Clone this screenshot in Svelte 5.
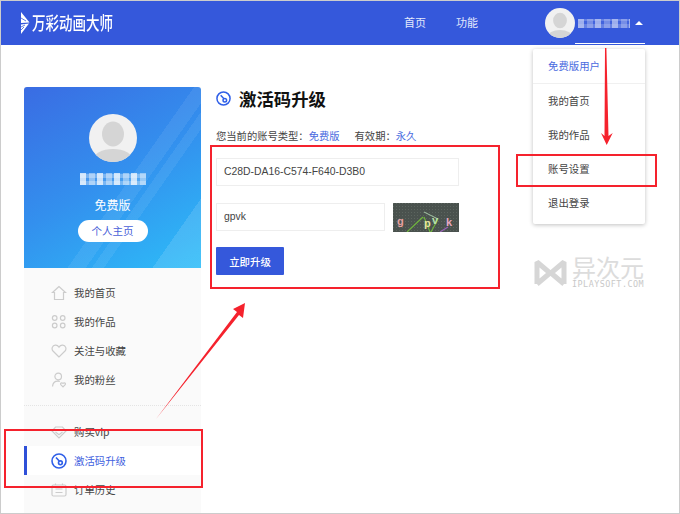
<script>
	const groupA = [
		{ label: "我的首页", icon: "M8 1.5 1.5 7.5H3.5V14.5H12.5V7.5H14.5Z" },
		{ label: "我的作品", icon: "M6 4A2.3 2.3 0 1 1 1.4 4A2.3 2.3 0 1 1 6 4ZM14 4A2.3 2.3 0 1 1 9.4 4A2.3 2.3 0 1 1 14 4ZM6 11.5A2.3 2.3 0 1 1 1.4 11.5A2.3 2.3 0 1 1 6 11.5ZM14 11.5A2.3 2.3 0 1 1 9.4 11.5A2.3 2.3 0 1 1 14 11.5Z" },
		{ label: "关注与收藏", icon: "M8 14 2 8C.2 5.8 1.2 2.5 4.3 2.2 6 2 7.2 3 8 4.2 8.8 3 10 2 11.7 2.2 14.8 2.5 15.8 5.8 14 8Z" },
		{ label: "我的粉丝", icon: "M10.5 4.5A3.3 3.3 0 1 1 3.9 4.5A3.3 3.3 0 1 1 10.5 4.5ZM1.5 14.5C1.8 11 3.8 9.2 6.8 9.2 7.6 9.2 8.2 9.3 8.8 9.5M12 14.8 9.8 12.6C9 11.5 10.6 10 12 11.4 13.4 10 15 11.5 14.2 12.6Z" }
	];
	const groupB = [
		{ label: "购买vip", icon: "M4.5 3H11.5L15 7 8 14 1 7ZM4.5 8 8 10.8 11.5 8" },
		{ label: "激活码升级", icon: "M15 8A7 7 0 1 1 1 8A7 7 0 1 1 15 8ZM5 4.5 8 7.8M11.3 9.8A1.9 1.9 0 1 1 7.5 9.8A1.9 1.9 0 1 1 11.3 9.8Z", active: true },
		{ label: "订单历史", icon: "M2.5 3H13.5Q15 3 15 4.5V12.5Q15 14 13.5 14H2.5Q1 14 1 12.5V4.5Q1 3 2.5 3ZM4.5 1.5V3M11.5 1.5V3M4.5 7H11.5M4.5 10.5H11.5" },
		{ label: "", icon: "M2 3H14V13H2ZM2 4 8 9 14 4" }
	];
	const menu = ["我的首页", "我的作品", "账号设置", "退出登录"];
	const keyIcon = groupB[1].icon;
</script>

{#snippet avatar(cls)}
	<svg class={cls} viewBox="0 0 48 48">
		<circle cx="24" cy="24" r="24" fill="#f1f1f1" />
		<clipPath id="face-{cls}"><circle cx="24" cy="24" r="24" /></clipPath>
		<g clip-path="url(#face-{cls})" fill="#d5d5d5">
			<ellipse cx="24" cy="20" rx="11" ry="12.5" />
			<ellipse cx="24" cy="46" rx="20" ry="11" />
		</g>
	</svg>
{/snippet}

{#snippet navGroup(items)}
	<ul class="nav">
		{#each items as item}
			<li class:active={item.active}>
				<svg class="nav-icon" viewBox="0 0 16 16"><path d={item.icon} /></svg>
				{#if item.label}<span>{item.label}</span>{/if}
			</li>
		{/each}
	</ul>
{/snippet}

<div class="page">
	<header class="topbar">
		<div class="logo">
			<svg class="logo-mark" viewBox="0 0 10 22">
				<path d="M1 0 9.5 10.5 1 11Z M1 12.5 9 11.5 1 22Z" fill="#fff" />
				<path d="M1 6 6 9M1 15 5 13M1 18 4 15" stroke="#3558db" stroke-width="0.8" />
			</svg>
			<span class="logo-text">万彩动画大师</span>
		</div>
		<nav class="top-links">
			<span>首页</span>
			<span>功能</span>
		</nav>
		<div class="user">
			{@render avatar("top-avatar")}
			<div class="blur-name small"></div>
			<div class="caret"></div>
		</div>
	</header>

	<main class="body">
		<aside class="sidebar">
			<div class="profile">
				{@render avatar("big-avatar")}
				<div class="blur-name large"></div>
				<div class="plan">免费版</div>
				<div class="home-btn">个人主页</div>
			</div>
			{@render navGroup(groupA)}
			<hr class="divider" />
			{@render navGroup(groupB)}
		</aside>

		<section class="content">
			<h1>
				<svg class="title-icon" viewBox="0 0 16 16"><path d={keyIcon} /></svg>
				激活码升级
			</h1>
			<p class="account">
				<span>您当前的账号类型：<em>免费版</em></span>
				<span>有效期：<em>永久</em></span>
			</p>
			<div class="field code">C28D-DA16-C574-F640-D3B0</div>
			<div class="captcha-row">
				<div class="field">gpvk</div>
				<svg class="captcha" viewBox="0 0 66 29">
					<defs>
						<pattern id="dots" width="3" height="3" patternUnits="userSpaceOnUse">
							<rect width="1" height="1" fill="#5c655f" />
						</pattern>
					</defs>
					<rect width="66" height="29" fill="#4a524e" />
					<rect width="66" height="29" fill="url(#dots)" />
					<path d="M14 29 30 14M31 14 37 29M45 16 38 29" stroke="#6fb33e" stroke-width="1.2" fill="none" />
					<path d="M31 9 45 16" stroke="#a8c8a8" stroke-width="1" fill="none" />
					<path d="M47 29 55 24" stroke="#9a62b8" stroke-width="1.2" />
					<text x="4" y="22" class="cap-a">g</text>
					<text x="31" y="24" class="cap-b">p</text>
					<text x="39" y="21" class="cap-c">v</text>
					<text x="53" y="23" class="cap-d">k</text>
				</svg>
			</div>
			<button class="submit">立即升级</button>
		</section>
	</main>

	<div class="dropdown">
		<div class="drop-head">免费版用户</div>
		{#each menu as entry}
			<div class="drop-item">{entry}</div>
		{/each}
	</div>

	<div class="watermark">
		<svg class="wm-logo" viewBox="0 0 33 28">
			<path d="M3 26V4L16 15 3 26M30 26V4L17 15 30 26" fill="none" stroke="#d6d6d6" stroke-width="5" stroke-linejoin="bevel" />
		</svg>
		<div class="wm-text">
			<div class="wm-cn">异次元</div>
			<div class="wm-en">IPLAYSOFT.COM</div>
		</div>
	</div>

	<svg class="marks" viewBox="0 0 680 514">
		<g fill="none" stroke="#f5222d" stroke-width="2">
			<rect x="211" y="146" width="288" height="142" />
			<rect x="517" y="155" width="139" height="31" />
			<rect x="5" y="430" width="197" height="57" />
		</g>
		<g fill="#f5222d">
			<path d="M156 419 237 312 233 309 245 303 243 318 239 315Z" />
			<path d="M605 48 604.5 136 601 133 606.7 145 612.7 133 608.5 136 606.4 48Z" />
		</g>
	</svg>
</div>

<style>
	:global(body) {
		margin: 0;
		background: #fff;
	}
	.page {
		position: relative;
		box-sizing: border-box;
		width: 680px;
		height: 514px;
		border: 1px solid #ccc;
		overflow: hidden;
		font-family: "Noto Sans CJK SC", "Liberation Sans", sans-serif;
		color: #444;
	}
	.topbar {
		display: flex;
		align-items: center;
		height: 44px;
		padding-left: 19px;
		background: #3558db;
		color: #fff;
	}
	.logo {
		display: flex;
		align-items: center;
		gap: 2px;
		width: 384px;
	}
	.logo-mark {
		width: 10px;
		height: 22px;
	}
	.logo-text {
		display: inline-block;
		width: 81px;
		font-size: 15px;
		font-weight: 500;
		line-height: 20px;
		white-space: nowrap;
		transform: scale(0.9, 1.2);
		transform-origin: left center;
	}
	.top-links {
		display: flex;
		gap: 30px;
		margin-bottom: 2px;
		font-size: 11px;
		color: #e3e8fb;
		width: 141px;
	}
	.user {
		display: flex;
		align-items: center;
		align-self: stretch;
		width: 110px;
		position: relative;
	}
	.user::after {
		content: "";
		position: absolute;
		left: 30px;
		bottom: 1px;
		width: 70px;
		height: 1px;
		background: #fff;
	}
	.top-avatar {
		width: 30px;
		height: 30px;
		flex: none;
	}
	.blur-name {
		filter: blur(0.7px);
		background:
			repeating-linear-gradient(90deg, rgba(255, 255, 255, 0.7) 0 6px, transparent 6px 9px, rgba(255, 255, 255, 0.4) 9px 15px, transparent 15px 17px),
			repeating-linear-gradient(0deg, rgba(255, 255, 255, 0.35) 0 4px, rgba(255, 255, 255, 0.1) 4px 7px);
	}
	.blur-name.small {
		width: 52px;
		height: 9px;
		margin-left: 3px;
		opacity: 0.7;
	}
	.caret {
		margin-left: 5px;
		border: 4px solid transparent;
		border-top: 0;
		border-bottom: 4px solid #fff;
	}
	.body {
		display: flex;
		gap: 15px;
		padding: 41px 0 0 23px;
	}
	.sidebar {
		width: 177px;
		height: 426px;
		margin-top: 1px;
		flex: none;
		background: #fafafa;
	}
	.profile {
		display: flex;
		flex-direction: column;
		align-items: center;
		height: 181px;
		padding-top: 27px;
		box-sizing: border-box;
		border-radius: 3px 3px 0 0;
		color: #fff;
		background:
			linear-gradient(125deg, transparent 0 56%, rgba(255, 255, 255, 0.07) 56% 62%, transparent 62% 64%, rgba(255, 255, 255, 0.07) 64% 68%, transparent 68% 84%, rgba(255, 255, 255, 0.12) 84%),
			linear-gradient(150deg, #3a6ce3 0%, #3390ee 50%, #2dbdf8 100%);
	}
	.big-avatar {
		width: 48px;
		height: 48px;
		flex: none;
	}
	.blur-name.large {
		width: 66px;
		height: 12px;
		margin-top: 11px;
		flex: none;
	}
	.plan {
		margin-top: 11px;
		font-size: 12px;
		line-height: 18px;
	}
	.home-btn {
		width: 70px;
		height: 22px;
		margin-top: 6px;
		flex: none;
		border-radius: 11px;
		background: #fff;
		color: #4a5fd8;
		font-size: 10.5px;
		line-height: 22px;
		text-align: center;
	}
	.nav {
		list-style: none;
		margin: 0;
		padding: 10px 0 0;
	}
	.nav li {
		position: relative;
		display: flex;
		align-items: center;
		gap: 7px;
		height: 29px;
		padding-left: 27px;
		font-size: 10.4px;
	}
	.nav-icon {
		width: 16px;
		height: 16px;
		flex: none;
		fill: none;
		stroke: #cccccc;
		stroke-width: 1.2;
	}
	.nav li.active {
		background: #fff;
		color: #3f5fe0;
	}
	.nav li.active::before {
		content: "";
		position: absolute;
		left: 0;
		top: 0;
		bottom: 0;
		width: 3px;
		background: #2f50d8;
	}
	.nav li.active .nav-icon {
		stroke: #2f5fe8;
		stroke-width: 1.6;
	}
	.divider {
		margin: 11px 0 0;
		border: 0;
		border-top: 1px dotted #e4e4e4;
	}
	.divider + .nav {
		padding-top: 11px;
	}
	.content {
		width: 243px;
	}
	h1 {
		display: flex;
		align-items: center;
		gap: 8px;
		margin: 0;
		height: 25px;
		font-size: 17.4px;
		font-weight: 700;
		color: #111;
	}
	.title-icon {
		width: 15px;
		height: 15px;
		fill: none;
		stroke: #2f5fe8;
		stroke-width: 1.6;
	}
	.account {
		display: flex;
		gap: 15px;
		margin: 17px 0 0;
		font-size: 10.3px;
		line-height: 16px;
		color: #444;
	}
	em {
		font-style: normal;
		color: #4a6be0;
	}
	.field {
		box-sizing: border-box;
		height: 28px;
		padding-left: 7px;
		border: 1px solid #eee;
		font: 10.4px/26px "Liberation Sans", sans-serif;
		color: #444;
	}
	.code {
		margin-top: 14px;
	}
	.captcha-row {
		display: flex;
		justify-content: space-between;
		margin-top: 17px;
	}
	.captcha-row .field {
		width: 169px;
	}
	.captcha {
		width: 66px;
		height: 29px;
	}
	.captcha text {
		font: bold 11px "Liberation Sans", sans-serif;
	}
	.cap-a { fill: #e6a0a0; }
	.cap-b { fill: #e8e2a0; }
	.cap-c { fill: #b8e0a8; }
	.cap-d { fill: #e8a8c0; }
	.submit {
		display: block;
		width: 68px;
		height: 28px;
		margin-top: 15px;
		padding: 0;
		border: 0;
		border-radius: 1px;
		background: #3558db;
		color: #fff;
		font-family: inherit;
		font-size: 10.4px;
		font-weight: 500;
	}
	.dropdown {
		position: absolute;
		left: 532px;
		top: 48px;
		width: 112px;
		height: 175px;
		box-sizing: border-box;
		padding-left: 15px;
		background: #fff;
		border-radius: 2px;
		box-shadow: 0 1px 4px rgba(0, 0, 0, 0.25);
		font-size: 10.4px;
	}
	.drop-head {
		height: 34px;
		margin-left: -15px;
		padding-left: 15px;
		line-height: 34px;
		color: #4a6be0;
		border-bottom: 1px solid #f0f0f0;
	}
	.drop-item {
		height: 34px;
		line-height: 34px;
	}
	.watermark {
		position: absolute;
		left: 533px;
		top: 253px;
		display: flex;
		gap: 5px;
	}
	.wm-logo {
		width: 33px;
		height: 28px;
		margin-top: 4px;
	}
	.wm-cn {
		font-size: 24px;
		line-height: 25px;
		color: #dcdcdc;
	}
	.wm-en {
		font: 8.4px/10px "DejaVu Sans Mono", monospace;
		letter-spacing: 0.5px;
		color: #c8c8c8;
	}
	.marks {
		position: absolute;
		left: -1px;
		top: -1px;
		width: 680px;
		height: 514px;
		pointer-events: none;
	}
</style>
